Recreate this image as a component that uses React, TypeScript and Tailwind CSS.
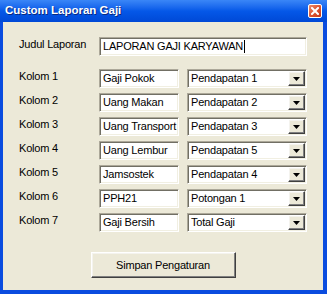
import React from "react";

const sunken =
  "border border-t-[#ACA899] border-l-[#ACA899] border-b-white border-r-white shadow-[inset_1px_1px_0_#716F64,inset_-1px_-1px_0_#F1EFE2] bg-white";
const raised =
  "border border-t-white border-l-white border-b-[#404040] border-r-[#404040] shadow-[inset_-1px_-1px_0_#808080,inset_1px_1px_0_#F4F3EE] bg-[#ECE9D8]";

function Combo({ value }: { value: string }) {
  return (
    <div className={`w-[120px] h-[19px] flex items-stretch p-[1px] ${sunken}`}>
      <div className="flex-1 flex items-center pl-[2px] leading-none">{value}</div>
      <div className={`w-[17px] flex items-center justify-center ${raised}`}>
        <svg width="7" height="4" viewBox="0 0 7 4">
          <path d="M0 0h7L3.5 4z" fill="#000" />
        </svg>
      </div>
    </div>
  );
}

export default function App() {
  const rows: [string, string, string][] = [
    ["Kolom 1", "Gaji Pokok", "Pendapatan 1"],
    ["Kolom 2", "Uang Makan", "Pendapatan 2"],
    ["Kolom 3", "Uang Transport", "Pendapatan 3"],
    ["Kolom 4", "Uang Lembur", "Pendapatan 5"],
    ["Kolom 5", "Jamsostek", "Pendapatan 4"],
    ["Kolom 6", "PPH21", "Potongan 1"],
    ["Kolom 7", "Gaji Bersih", "Total Gaji"],
  ];
  return (
    <div
      className="w-[327px] h-[294px] flex flex-col bg-[#0A4CDF] text-[11px] tracking-[-0.2px] text-black"
      style={{ fontFamily: '"Liberation Sans", Arial, sans-serif' }}
    >
      <div className="h-[22px] flex items-center pl-[5px] pr-[5px] bg-gradient-to-b from-[#3A86F7] via-[#0558E8] to-[#0048D6]">
        <span className="text-white font-bold text-[11.5px] leading-none tracking-[0px] [text-shadow:1px_1px_0_#0A2A80]">
          Custom Laporan Gaji
        </span>
        <div className="ml-auto w-[14px] h-[14px] rounded-[2px] border border-white bg-gradient-to-br from-[#EC8C6C] via-[#DD5431] to-[#C53B18] flex items-center justify-center">
          <svg width="8" height="8" viewBox="0 0 8 8">
            <path d="M1 1L7 7M7 1L1 7" stroke="#fff" strokeWidth="2" strokeLinecap="square" />
          </svg>
        </div>
      </div>
      <div className="flex-1 ml-[3px] mr-[4px] mb-[4px] bg-[#ECE9D8] flex flex-col pl-[16px] pt-[15px]">
        <div className="flex items-start h-[19px]">
          <div className="w-[80px] leading-[14px]">Judul Laporan</div>
          <div className={`w-[208px] h-[19px] flex items-center pl-[3px] leading-none ${sunken}`}>
            LAPORAN GAJI KARYAWAN
            <span className="inline-block w-[1px] h-[13px] bg-black ml-[1px]" />
          </div>
        </div>
        <div className="flex flex-col gap-[5px] mt-[13px]">
          {rows.map(([label, text, combo]) => (
            <div key={label} className="flex items-start h-[19px]">
              <div className="w-[80px] leading-[14px]">{label}</div>
              <div className={`w-[80px] h-[19px] flex items-center pl-[3px] leading-none overflow-hidden whitespace-nowrap ${sunken}`}>
                {text}
              </div>
              <div className="ml-[8px]">
                <Combo value={combo} />
              </div>
            </div>
          ))}
        </div>
        <div className="flex justify-center mt-[20px] pr-[16px]">
          <button className={`w-[145px] h-[26px] flex items-center justify-center text-[11px] ${raised}`}>
            Simpan Pengaturan
          </button>
        </div>
      </div>
    </div>
  );
}
